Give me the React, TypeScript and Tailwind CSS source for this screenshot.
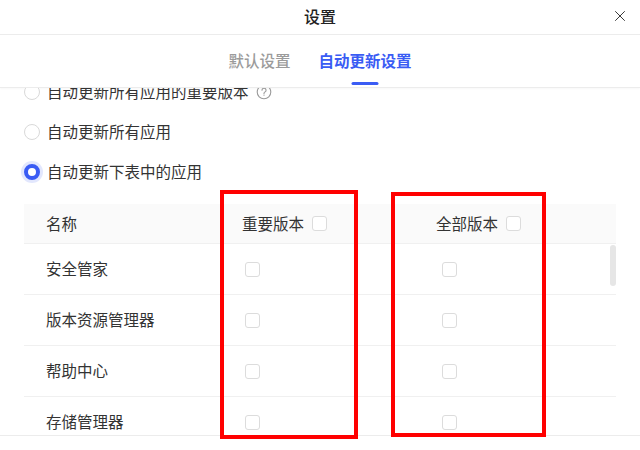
import React from 'react';
import { X } from 'lucide-react';

const apps = ['安全管家', '版本资源管理器', '帮助中心', '存储管理器'];

function Checkbox() {
  return <span className="block h-[15px] w-[15px] rounded-[3px] border border-[#dcdcdc] bg-white" />;
}

function Radio({ checked = false }: { checked?: boolean }) {
  if (checked) {
    return (
      <span className="block h-[16px] w-[16px] rounded-full border-[4px] border-[#3a5cf4] bg-white shadow-[0_0_0_3px_rgba(58,92,244,0.15)]" />
    );
  }
  return <span className="block h-[16px] w-[16px] rounded-full border border-[#d9d9d9] bg-white" />;
}

function HelpIcon() {
  return (
    <svg width="16" height="16" viewBox="0 0 16 16" fill="none" stroke="#9a9a9a" strokeWidth="1.1">
      <circle cx="8" cy="8" r="6.8" />
      <path d="M6 6.3a2 2 0 1 1 2.8 1.8c-.5.3-.8.7-.8 1.3v.5" strokeLinecap="round" />
      <circle cx="8" cy="11.6" r="0.5" fill="#9a9a9a" stroke="none" />
    </svg>
  );
}

export default function App() {
  return (
    <div className="relative flex h-[450px] w-[640px] flex-col overflow-hidden bg-white font-['Noto_Sans_CJK_SC','Noto_Sans',sans-serif] text-[#333]">
      {/* Title bar */}
      <div className="grid h-[35px] shrink-0 grid-cols-[1fr_auto_1fr] items-center border-b border-[#ececec] pb-[3px]">
        <span />
        <span className="text-[16px] font-medium text-[#222]">设置</span>
        <button className="mr-[11px] justify-self-end text-[#333]">
          <X size={18} strokeWidth={1.3} />
        </button>
      </div>

      {/* Tabs */}
      <div className="flex h-[53px] shrink-0 justify-center gap-[28px] border-b border-[#ececec] shadow-[0_1px_2px_rgba(0,0,0,0.03)]">
        <div className="flex h-full items-center text-[15.5px] font-medium text-[#9b9b9b]">默认设置</div>
        <div className="relative flex h-full items-center text-[15.5px] font-semibold text-[#3a5cf4]">
          自动更新设置
          <span className="absolute bottom-[2px] left-1/2 h-[3px] w-[27px] -translate-x-1/2 rounded-full bg-[#3a5cf4]" />
        </div>
      </div>

      {/* Scrolled content */}
      <div className="relative min-h-0 flex-1 overflow-hidden">
        <div className="-mt-[16px] px-[24px]">
          <div className="flex h-[40px] items-center gap-[7px] text-[15.5px]">
            <Radio />
            <span>自动更新所有应用的重要版本</span>
            <HelpIcon />
          </div>
          <div className="flex h-[40px] items-center gap-[7px] text-[15.5px]">
            <Radio />
            <span>自动更新所有应用</span>
          </div>
          <div className="flex h-[40px] items-center gap-[7px] text-[15.5px]">
            <Radio checked />
            <span>自动更新下表中的应用</span>
          </div>

          <div className="mt-[12px] w-[592px] text-[15.5px]">
            <div className="grid h-[40px] grid-cols-[218px_194px_1fr] items-center border-b border-[#f0f0f0] bg-[#fafafa]">
              <span className="pl-[22px]">名称</span>
              <div className="flex items-center gap-[8px]">
                <span>重要版本</span>
                <Checkbox />
              </div>
              <div className="flex items-center gap-[8px]">
                <span>全部版本</span>
                <Checkbox />
              </div>
            </div>
            {apps.map((name) => (
              <div
                key={name}
                className="grid h-[51px] grid-cols-[218px_194px_1fr] items-center border-b border-[#f0f0f0]"
              >
                <span className="pl-[22px]">{name}</span>
                <div className="pl-[3px]">
                  <Checkbox />
                </div>
                <div className="pl-[6px]">
                  <Checkbox />
                </div>
              </div>
            ))}
          </div>
        </div>
        {/* scrollbar thumb */}
        <span className="absolute left-[610px] top-[157px] h-[41px] w-[6px] rounded-full bg-[#e6e6e6]" />
      </div>

      {/* Footer edge */}
      <div className="h-[15px] shrink-0 border-t border-[#ececec]" />

      {/* Red annotation boxes */}
      <span className="absolute left-[220px] top-[190px] h-[249px] w-[138px] border-[4px] border-[#ff0000]" />
      <span className="absolute left-[391px] top-[192px] h-[245px] w-[155px] border-[4px] border-[#ff0000]" />
    </div>
  );
}
